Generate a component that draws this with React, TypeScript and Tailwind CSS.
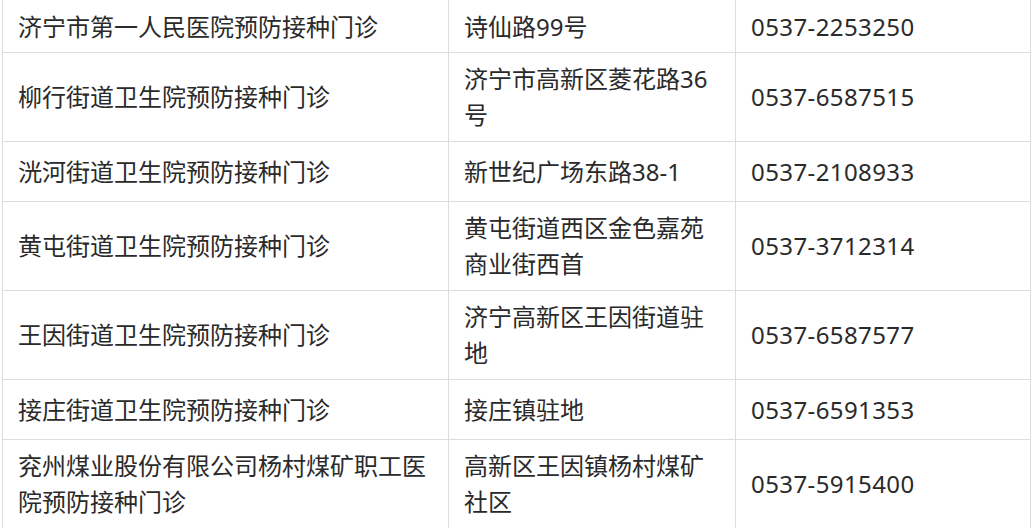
import React from "react";

const rows: [string, string, string][] = [
  ["济宁市第一人民医院预防接种门诊", "诗仙路99号", "0537-2253250"],
  ["柳行街道卫生院预防接种门诊", "济宁市高新区菱花路36号", "0537-6587515"],
  ["洸河街道卫生院预防接种门诊", "新世纪广场东路38-1", "0537-2108933"],
  ["黄屯街道卫生院预防接种门诊", "黄屯街道西区金色嘉苑商业街西首", "0537-3712314"],
  ["王因街道卫生院预防接种门诊", "济宁高新区王因街道驻地", "0537-6587577"],
  ["接庄街道卫生院预防接种门诊", "接庄镇驻地", "0537-6591353"],
  ["兖州煤业股份有限公司杨村煤矿职工医院预防接种门诊", "高新区王因镇杨村煤矿社区", "0537-5915400"],
];

export default function App() {
  return (
    <div
      className="w-[1032px] h-[528px] overflow-hidden bg-white pl-[2px] text-[#2a2a2a]"
      style={{ fontFamily: '"Noto Sans", "Noto Sans CJK SC", sans-serif' }}
    >
      <table className="-mt-[8px] w-[1028px] table-fixed border-collapse text-[24px] leading-[36px]">
        <colgroup>
          <col className="w-[446px]" />
          <col className="w-[287px]" />
          <col className="w-[295px]" />
        </colgroup>
        <tbody>
          {rows.map((r, i) => (
            <tr key={i} className="h-[60px]">
              <td className={`border-[1.5px] border-[#dddddd] px-[15px] ${i === 0 ? "pt-[14px] pb-[6px]" : "py-[8px]"} align-middle break-all`}>{r[0]}</td>
              <td className={`border-[1.5px] border-[#dddddd] px-[15px] ${i === 0 ? "pt-[14px] pb-[6px]" : "py-[8px]"} align-middle break-all`}>{r[1]}</td>
              <td className={`border-[1.5px] border-[#dddddd] px-[15px] ${i === 0 ? "pt-[14px] pb-[6px]" : "py-[8px]"} align-middle tracking-[0.4px]`}>{r[2]}</td>
            </tr>
          ))}
        </tbody>
      </table>
    </div>
  );
}
